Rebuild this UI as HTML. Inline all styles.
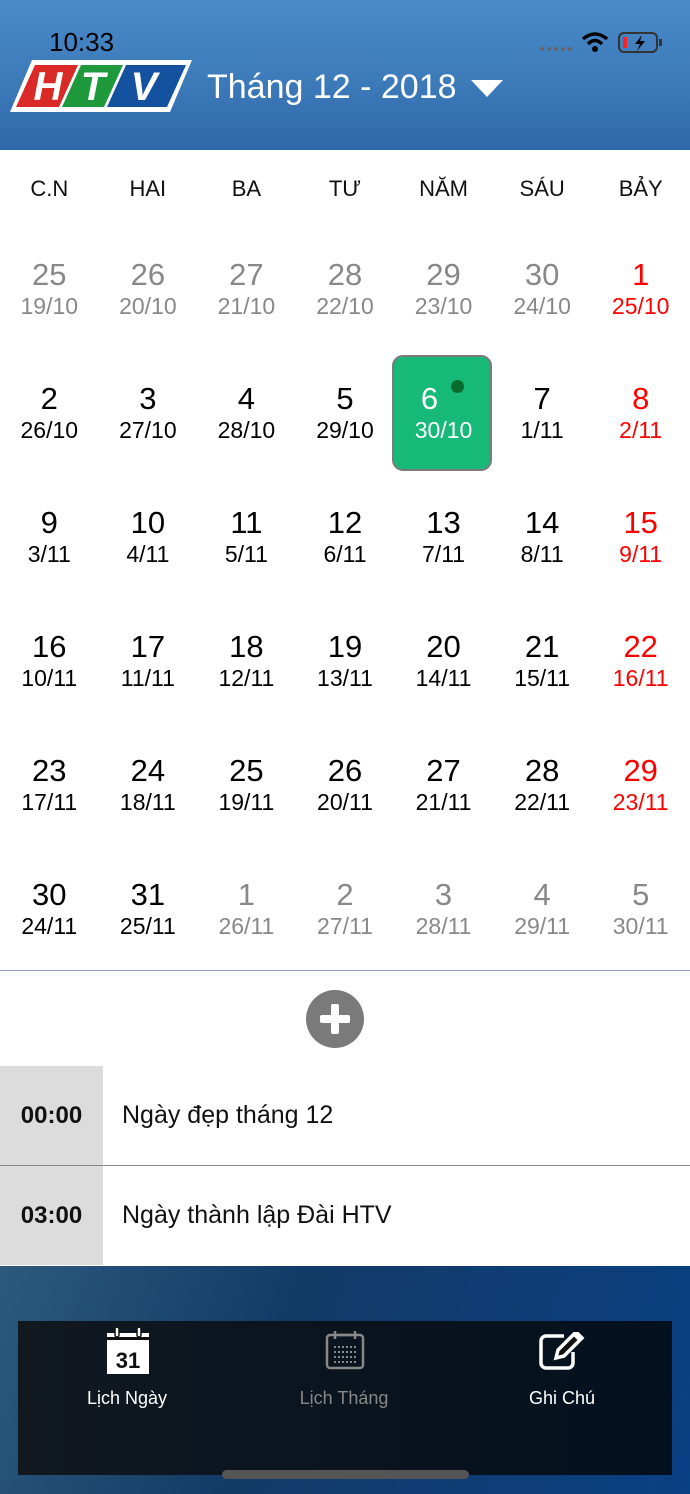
<!DOCTYPE html>
<html><head><meta charset="utf-8"><style>
*{margin:0;padding:0;box-sizing:border-box}
body{width:690px;height:1494px;position:relative;overflow:hidden;font-family:"Liberation Sans",sans-serif;background:#fff}
.hdr{position:absolute;left:0;top:0;width:690px;height:150px;background:linear-gradient(180deg,#4a8bc8 0%,#3b78b8 60%,#2f68a8 100%)}
.time{position:absolute;left:49px;top:27px;font-size:26px;color:#000}
.title{position:absolute;left:207px;top:68px;font-size:34px;color:#fff}
.tri{position:absolute;left:471px;top:80px;width:0;height:0;border-left:16px solid transparent;border-right:16px solid transparent;border-top:17px solid #fff}
.wk{position:absolute;top:176px;width:98.57px;text-align:center;font-size:22px;color:#111}
.c{position:absolute;width:98.57px;text-align:center}
.n{font-size:31px;line-height:34px}
.l{font-size:23px;line-height:28px}
.g{color:#888}.k{color:#000}.r{color:#f00}.w{color:#fff}
.today{position:absolute;left:392px;top:355px;width:100px;height:116px;background:#17b978;border:2px solid #7a7a7a;border-radius:11px}
.dot{position:absolute;left:451px;top:380px;width:13px;height:13px;border-radius:50%;background:#086a2c}
.sep{position:absolute;left:0;width:690px;height:1px;background:#888}
.ev{position:absolute;left:0;width:690px;height:99px}
.ev .t{position:absolute;left:0;top:0;width:103px;height:99px;background:#dcdcdc;font-weight:bold;font-size:24px;line-height:99px;text-align:center;color:#111}
.ev .d{position:absolute;left:122px;top:0;line-height:99px;font-size:25px;color:#111}
.bot{position:absolute;left:0;top:1266px;width:690px;height:228px;background:linear-gradient(110deg,#2b5a7e 0%,#123a66 40%,#0a4084 100%)}
.tab{position:absolute;left:18px;top:1321px;width:654px;height:154px;background:linear-gradient(90deg,#111820,#03101e)}
.tl{position:absolute;top:1388px;width:220px;text-align:center;font-size:18px}
.home{position:absolute;left:222px;top:1470px;width:247px;height:9px;border-radius:5px;background:#555}
</style></head><body>
<div class="hdr"></div>
<div class="time">10:33</div>
<svg style="position:absolute;left:10px;top:60px" width="182" height="52" viewBox="0 0 182 52">
<polygon points="22,0 182,0 160,52 0,52" fill="#fff"/>
<polygon points="25,5 68,5 49,47 6,47" fill="#d92a27"/>
<polygon points="71,5 113,5 94,47 52,47" fill="#1e9a3c"/>
<polygon points="116,5 176,5 157,47 97,47" fill="#1452a0"/>
<text x="38" y="40" font-family="Liberation Sans" font-weight="bold" font-style="italic" font-size="40" fill="#fff" text-anchor="middle">H</text>
<text x="83" y="40" font-family="Liberation Sans" font-weight="bold" font-style="italic" font-size="40" fill="#fff" text-anchor="middle">T</text>
<text x="134" y="40" font-family="Liberation Sans" font-weight="bold" font-style="italic" font-size="40" fill="#fff" text-anchor="middle">V</text>
</svg>
<div class="title">Tháng 12 - 2018</div>
<div class="tri"></div>
<div style="position:absolute;left:540px;top:47px;width:32px;height:4px;border-top:4px dotted #666"></div>
<svg style="position:absolute;left:581px;top:31px" width="28" height="22" viewBox="0 0 28 22"><path d="M2 8 Q14 -2 26 8" stroke="#000" stroke-width="3.5" fill="none"/><path d="M7 13 Q14 6 21 13" stroke="#000" stroke-width="3.5" fill="none"/><circle cx="14" cy="18" r="3" fill="#000"/></svg>
<svg style="position:absolute;left:618px;top:32px" width="46" height="22" viewBox="0 0 46 22"><rect x="1" y="1" width="38" height="19" rx="5" fill="none" stroke="#333" stroke-width="2"/><rect x="5" y="5" width="4" height="11" fill="#f22"/><rect x="41" y="7" width="3" height="7" fill="#333"/><path d="M24 3 L17 12 L22 12 L19 19 L27 9 L22 9 Z" fill="#000"/></svg>

<div class="wk" style="left:0">C.N</div><div class="wk" style="left:98.57px">HAI</div><div class="wk" style="left:197.14px">BA</div><div class="wk" style="left:295.71px">TƯ</div><div class="wk" style="left:394.29px">NĂM</div><div class="wk" style="left:492.86px">SÁU</div><div class="wk" style="left:591.43px">BẢY</div>

<div class="today"></div><div class="dot"></div>
<div id="grid"></div>

<div class="sep" style="top:970px;background:#8aa0c0"></div>
<svg style="position:absolute;left:306px;top:990px" width="58" height="58" viewBox="0 0 58 58"><circle cx="29" cy="29" r="29" fill="#7a7a7a"/><rect x="14" y="25" width="30" height="8" rx="2" fill="#fff"/><rect x="25" y="14" width="8" height="30" rx="2" fill="#fff"/></svg>
<div class="ev" style="top:1066px"><div class="t">00:00</div><div class="d">Ngày đẹp tháng 12</div></div>
<div class="sep" style="top:1165px"></div>
<div class="ev" style="top:1166px"><div class="t">03:00</div><div class="d">Ngày thành lập Đài HTV</div></div>
<div class="bot"></div>
<div class="tab"></div>
<svg style="position:absolute;left:106px;top:1327px" width="44" height="48" viewBox="0 0 44 48"><rect x="1" y="6" width="42" height="41" fill="#fff"/><rect x="1" y="10" width="42" height="3" fill="#111"/><rect x="9" y="0" width="4" height="10" rx="2" fill="#fff" stroke="#111" stroke-width="1.5"/><rect x="31" y="0" width="4" height="10" rx="2" fill="#fff" stroke="#111" stroke-width="1.5"/><text x="22" y="41" font-family="Liberation Sans" font-weight="bold" font-size="22" fill="#111" text-anchor="middle">31</text></svg>
<svg style="position:absolute;left:325px;top:1330px" width="40" height="40" viewBox="0 0 40 40" fill="none" stroke="#888" stroke-width="2.5"><rect x="2" y="5" width="36" height="33" rx="3"/><path d="M10 1v8M30 1v8M14 5h12"/><g stroke-width="2" stroke-dasharray="2 2"><path d="M9 17h22M9 22h22M9 27h22M9 32h22"/></g></svg>
<svg style="position:absolute;left:538px;top:1332px" width="50" height="40" viewBox="0 0 50 40" fill="none" stroke="#fff" stroke-width="3.5"><path d="M26 4H8a5 5 0 0 0-5 5v22a5 5 0 0 0 5 5h22a5 5 0 0 0 5-5V20"/><path d="M18 26l2-8 18-18 6 6-18 18z" fill="#111"/><path d="M36 2l6 6"/></svg>
<div class="tl" style="left:17px;color:#fff">Lịch Ngày</div>
<div class="tl" style="left:234px;color:#888">Lịch Tháng</div>
<div class="tl" style="left:452px;color:#fff">Ghi Chú</div>
<div class="home"></div>
<script>
var rows=[
[["25","19/10","g"],["26","20/10","g"],["27","21/10","g"],["28","22/10","g"],["29","23/10","g"],["30","24/10","g"],["1","25/10","r"]],
[["2","26/10","k"],["3","27/10","k"],["4","28/10","k"],["5","29/10","k"],["6","30/10","w"],["7","1/11","k"],["8","2/11","r"]],
[["9","3/11","k"],["10","4/11","k"],["11","5/11","k"],["12","6/11","k"],["13","7/11","k"],["14","8/11","k"],["15","9/11","r"]],
[["16","10/11","k"],["17","11/11","k"],["18","12/11","k"],["19","13/11","k"],["20","14/11","k"],["21","15/11","k"],["22","16/11","r"]],
[["23","17/11","k"],["24","18/11","k"],["25","19/11","k"],["26","20/11","k"],["27","21/11","k"],["28","22/11","k"],["29","23/11","r"]],
[["30","24/11","k"],["31","25/11","k"],["1","26/11","g"],["2","27/11","g"],["3","28/11","g"],["4","29/11","g"],["5","30/11","g"]]];
var h="";
rows.forEach(function(r,i){r.forEach(function(c,j){var x=j*98.57,y=258+i*124;var n=c[2]=="w"?' style="margin-left:-28px"':'';
h+='<div class="c" style="left:'+x+'px;top:'+y+'px"><div class="n '+c[2]+'"'+n+'>'+c[0]+'</div><div class="l '+c[2]+'">'+c[1]+'</div></div>';});});
document.getElementById("grid").innerHTML=h;
</script>
</body></html>
